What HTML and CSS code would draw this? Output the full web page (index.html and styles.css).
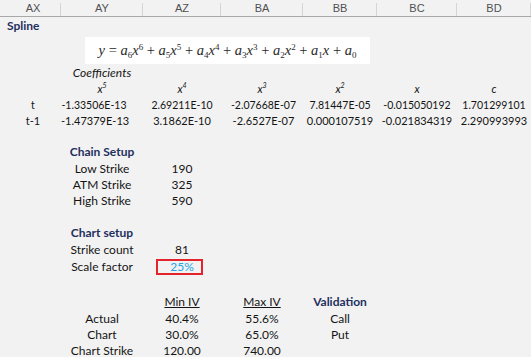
FILE: index.html
```html
<!DOCTYPE html>
<html lang="en">
<head>
    <meta charset="UTF-8">
    <title>Spline</title>
    <link rel="stylesheet" href="styles.css">
</head>
<body>
    <div class="colbar">
        <span class="gap"></span>
        <span>AX</span><span>AY</span><span>AZ</span><span>BA</span><span>BB</span><span>BC</span><span>BD</span>
    </div>
    <table class="sheet">
        <colgroup>
            <col class="c-ax"><col class="c-ay"><col class="c-az"><col class="c-ba"><col class="c-bb"><col class="c-bc"><col class="c-bd">
        </colgroup>
        <tr class="h17"><td class="title">Spline</td><td></td><td></td><td></td><td></td><td></td><td></td></tr>
        <tr class="h16">
            <td></td>
            <td colspan="5" rowspan="2" class="top">
                <div class="formula">
                    <i>y</i>&nbsp;=&nbsp;<i>a</i><sub>6</sub><i>x</i><sup>6</sup>&nbsp;+&nbsp;<i>a</i><sub>5</sub><i>x</i><sup>5</sup>&nbsp;+&nbsp;<i>a</i><sub>4</sub><i>x</i><sup>4</sup>&nbsp;+&nbsp;<i>a</i><sub>3</sub><i>x</i><sup>3</sup>&nbsp;+&nbsp;<i>a</i><sub>2</sub><i>x</i><sup>2</sup>&nbsp;+&nbsp;<i>a</i><sub>1</sub><i>x</i>&nbsp;+&nbsp;<i>a</i><sub>0</sub>
                </div>
            </td>
            <td></td>
        </tr>
        <tr class="h15"><td></td><td></td></tr>
        <tr class="h16"><td></td><td class="italic">Coefficients</td><td></td><td></td><td></td><td></td><td></td></tr>
        <tr class="h16 powers">
            <td></td>
            <td>x<sup>5</sup></td><td>x<sup>4</sup></td><td>x<sup>3</sup></td><td>x<sup>2</sup></td><td>x</td><td>c</td>
        </tr>
        <tr class="h15 small">
            <td>t</td>
            <td class="lft">-1.33506E-13</td><td>2.69211E-10</td><td class="rgt">-2.07668E-07</td><td>7.81447E-05</td><td>-0.015050192</td><td>1.701299101</td>
        </tr>
        <tr class="h17 coef">
            <td>t-1</td>
            <td class="lft">-1.47379E-13</td><td>3.1862E-10</td><td class="rgt">-2.6527E-07</td><td>0.000107519</td><td>-0.021834319</td><td>2.290993993</td>
        </tr>
        <tr class="h15"><td colspan="7"></td></tr>

        <!-- chain setup -->
        <tr class="h16"><td></td><td class="head">Chain Setup</td><td colspan="5"></td></tr>
        <tr class="h17"><td></td><td>Low Strike</td><td>190</td><td colspan="4"></td></tr>
        <tr class="h16"><td></td><td>ATM Strike</td><td>325</td><td colspan="4"></td></tr>
        <tr class="h16"><td></td><td>High Strike</td><td>590</td><td colspan="4"></td></tr>
        <tr class="h16"><td colspan="7"></td></tr>

        <!-- chart setup -->
        <tr class="h16"><td></td><td class="head">Chart setup</td><td colspan="5"></td></tr>
        <tr class="h17"><td></td><td>Strike count</td><td>81</td><td colspan="4"></td></tr>
        <tr class="h17"><td></td><td>Scale factor</td><td><div class="input">25%</div></td><td colspan="4"></td></tr>
        <tr class="h18"><td colspan="7"></td></tr>

        <!-- IV range -->
        <tr class="h17"><td></td><td></td><td class="under">Min IV</td><td class="under">Max IV</td><td class="head">Validation</td><td colspan="2"></td></tr>
        <tr class="h17"><td></td><td>Actual</td><td>40.4%</td><td>55.6%</td><td>Call</td><td colspan="2"></td></tr>
        <tr class="h16"><td></td><td>Chart</td><td>30.0%</td><td>65.0%</td><td>Put</td><td colspan="2"></td></tr>
        <tr class="h16"><td></td><td>Chart Strike</td><td>120.00</td><td>740.00</td><td></td><td colspan="2"></td></tr>
    </table>
</body>
</html>
```

FILE: styles.css
```css
body {
	margin: 0;
	background: #f2f2f2;
	font-family: Lato, "Liberation Sans", sans-serif;
	font-size: 12px;
	color: #141414;
	overflow: hidden;
}

/* column letters */
.colbar {
	display: grid;
	grid-template-columns: 5px 56px 82px 78px 82px 74px 80px 74px;
	height: 16px;
	border-bottom: 1px solid #a8a8a8;
	font-family: "Liberation Sans", Arial, sans-serif;
	font-size: 11px;
	color: #505050;
}
.colbar span {
	text-align: center;
	line-height: 17px;
	background: linear-gradient(#d5d5d5, #d5d5d5) right 3px / 1px 13px no-repeat;
}
.colbar .gap {
	background: none;
}

/* grid */
.sheet {
	margin-left: 5px;
	border-collapse: collapse;
	border-spacing: 0;
	table-layout: fixed;
	width: 526px;
}
.c-ax { width: 56px; }
.c-ay { width: 82px; }
.c-az { width: 78px; }
.c-ba { width: 82px; }
.c-bb { width: 74px; }
.c-bc { width: 80px; }
.c-bd { width: 74px; }

.sheet td {
	padding: 0;
	text-align: center;
	line-height: 14px;
	white-space: nowrap;
}
.h15 { height: 15px; }
.h16 { height: 16px; }
.h17 { height: 17px; }
.h18 { height: 18px; }

.sheet td.top {
	vertical-align: top;
}
.sheet td.title {
	text-align: left;
	padding-left: 2px;
	font-weight: bold;
	color: #1f2f5e;
}
.head {
	font-weight: bold;
	color: #1f2f5e;
}
.italic {
	font-style: italic;
}
.under {
	text-decoration: underline;
}

.powers td {
	font-style: italic;
	font-size: 11px;
}
.powers sup {
	font-size: 7px;
	vertical-align: 5px;
	line-height: 0;
}
.small td {
	font-size: 10.5px;
}
.coef td {
	font-size: 11px;
}
.sheet td.lft {
	padding-right: 16px;
}
.sheet td.rgt {
	padding-left: 3px;
}

/* equation picture */
.formula {
	margin: 3px 0 0 24px;
	width: 285px;
	height: 27px;
	background: #fff;
	text-align: center;
	line-height: 27px;
	font-family: "Liberation Serif", serif;
	font-size: 14.5px;
	color: #2a2a2a;
}
.formula sub,
.formula sup {
	font-size: 9px;
	line-height: 0;
}
.formula sup {
	vertical-align: 5px;
}
.formula sub {
	vertical-align: -3px;
}

/* highlighted input cell */
.input {
	box-sizing: border-box;
	width: 47px;
	height: 16px;
	margin-left: 13px;
	padding-left: 5px;
	border: 2px solid #e3242b;
	color: #22a4e6;
	line-height: 12px;
}
```
